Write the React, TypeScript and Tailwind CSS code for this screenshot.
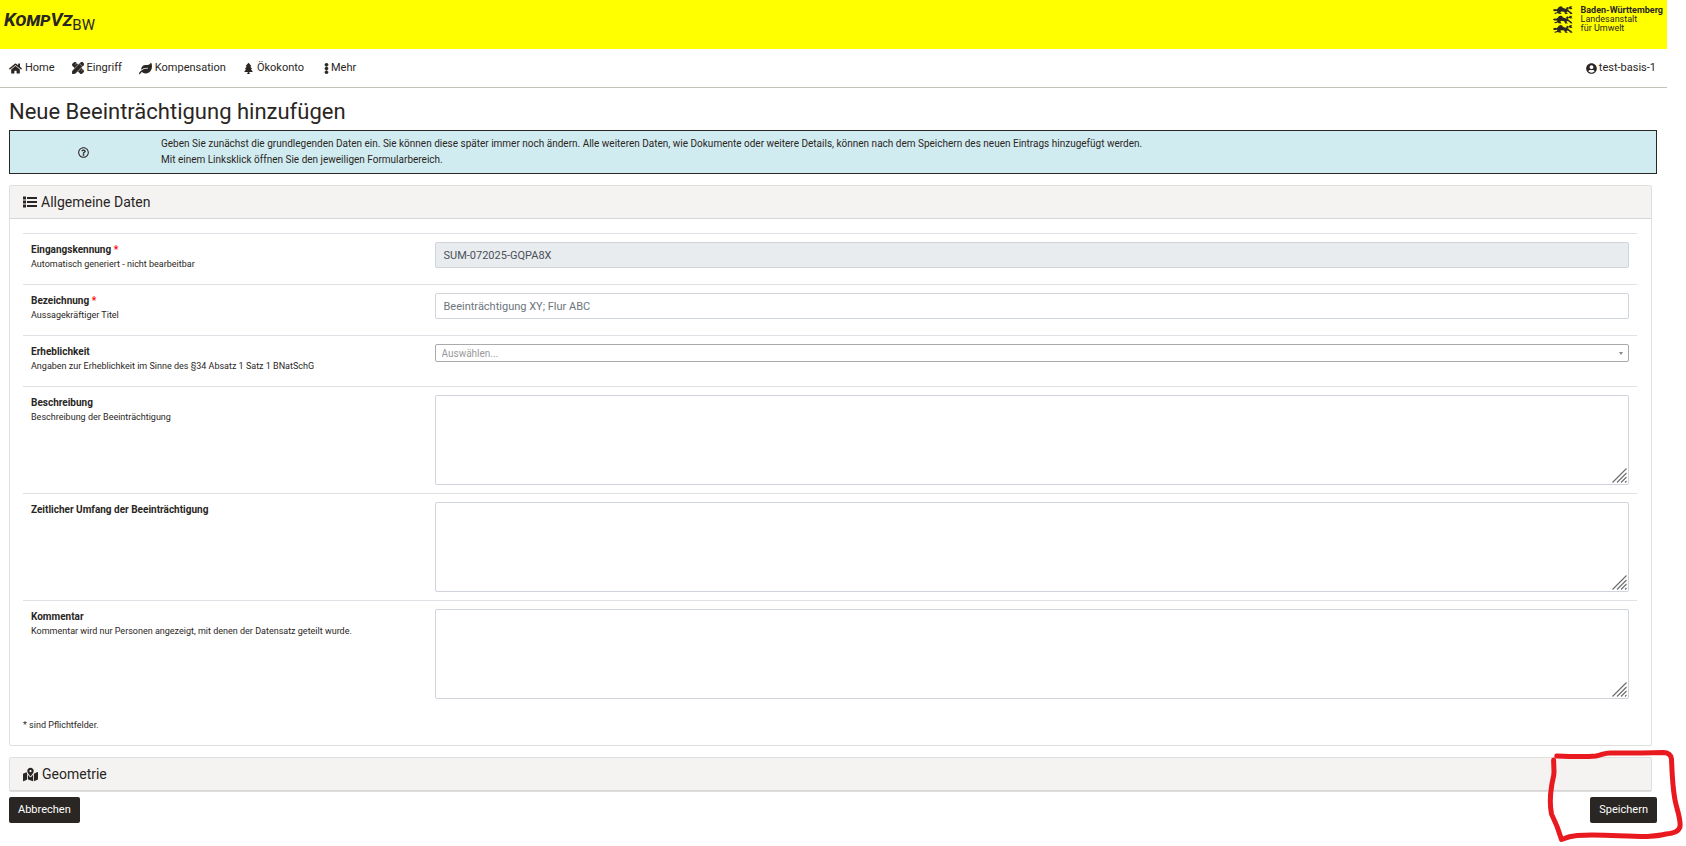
import { useState } from 'react';
import type { ReactNode } from 'react';
import {
  FaEllipsisV,
  FaHome,
  FaLeaf,
  FaMapMarkedAlt,
  FaPencilRuler,
  FaRegQuestionCircle,
  FaTree,
  FaUserCircle,
} from 'react-icons/fa';

const Lion = () => (
  <>
    <path d="M0.2 3.6 L2.2 3 L3.2 3.4 L4.8 2.4 L5.8 0.9 L7.6 0.3 L9.2 0.7 L9.6 1.8 L11.6 2.6 L13.6 3 L15.4 4 L17 5.4 L18.2 6 L19.6 8 L17.4 7.9 L15.8 6.2 L14.2 5.6 L13.4 6.6 L15 8 L12.2 8 L11.2 5.8 L8.8 5.4 L7.2 6 L8.6 8 L5.8 7.8 L4.8 7.1 L2.2 7.9 L1 7.2 L4 6.2 L4.4 5 L1.4 5.2 L0.2 4.6 Z" />
    <path d="M14.6 3.8 L13 2.4 L14 0.9 L15.8 1.6 L17 0.3 L19.4 0.6 L18.2 1.7 L19.6 2.9 L17.4 3.2 L16 2.4 L15 2.6 L15.6 3.8 Z" />
  </>
);

const StateLogo = () => (
  <svg viewBox="0 0 20 28" className="h-7 w-5 fill-[#2a2623]" aria-hidden="true">
    <Lion />
    <g transform="translate(0 9.4)"><Lion /></g>
    <g transform="translate(0 18.8)"><Lion /></g>
  </svg>
);

const ListIcon = () => (
  <svg viewBox="0 0 14 12" className="h-3 w-3.5 fill-current" aria-hidden="true">
    <path d="M0 0.500h3v3H0zM0 4.500h3v3H0zM0 8.500h3v3H0zM4 1h10v2H4zM4 5h10v2H4zM4 9h10v2H4z" />
  </svg>
);

const navItems = [
  { label: 'Home', icon: <FaHome size={13} /> },
  { label: 'Eingriff', icon: <FaPencilRuler size={12} strokeWidth={30} stroke="currentColor" /> },
  { label: 'Kompensation', icon: <FaLeaf size={13} /> },
  { label: 'Ökokonto', icon: <FaTree size={11} /> },
  { label: 'Mehr', icon: <FaEllipsisV size={11} strokeWidth={30} stroke="currentColor" className="-mr-1" /> },
];

interface RowProps {
  id: string
  label: string
  help?: string
  required?: boolean
  children: ReactNode
}

const FormRow = ({ id, label, help, required, children }: RowProps) => (
  <div className="flex min-h-[51px] border-t border-[#dee2e6]">
    <div className="w-1/4 px-2 pt-2">
      <label htmlFor={id} className="block text-[10px] leading-[15px] font-bold">
        {label} {required && <span className="text-[#ff0000]">*</span>}
      </label>
      {help && <p className="text-[9px] leading-[14px]">{help}</p>}
    </div>
    <div className="w-3/4 p-2">{children}</div>
  </div>
);

const inputClass = 'block h-[26px] w-full rounded-xs border border-[#ced4da] px-2 text-[11px] placeholder:text-[#6c757d]';

const GrowArea = ({ id }: { id: string }) => (
  <div className="relative">
    <textarea id={id} className="block h-[90px] w-full resize-none rounded-xs border border-[#ced4da] p-2 text-[11px]" />
    <svg viewBox="0 0 15 15" className="pointer-events-none absolute right-0.5 bottom-0.5 size-[15px] stroke-[#6b6b6b]" aria-hidden="true">
      <path d="M0.5 14.5 L14.5 0.5 M5 14.5 L14.5 5 M9 14.5 L14.5 9 M13 14.5 L14.5 13" fill="none" strokeWidth="1.1" />
    </svg>
  </div>
);

const App = () => {
  const [title, setTitle] = useState('');

  return (
    <div className="pr-[19px] pb-6 font-[Roboto,'Liberation_Sans',sans-serif] text-[#2a2623]">
      <header className="flex h-[49px] items-start justify-between bg-[#ffff00] pr-1 pl-1">
        <a href="#" className="pt-2 text-[19px] leading-6">
          <span className="font-bold italic [font-variant:small-caps]">KompVz</span>
          <sub className="text-[15px]">BW</sub>
        </a>
        <div className="flex gap-2 pt-1.5">
          <StateLogo />
          <p className="text-[9px] leading-[9px]">
            <strong>Baden-Württemberg</strong><br />Landesanstalt<br />für Umwelt
          </p>
        </div>
      </header>

      <nav className="flex h-[39px] items-center justify-between border-b border-[#c4c2b8] px-[9px] text-[11px]">
        <div className="flex gap-[17px]">
          {navItems.map((item) => (
            <a key={item.label} href="#" className="flex items-center gap-[3px]">{item.icon}{item.label}</a>
          ))}
        </div>
        <a href="#" className="flex items-center gap-0.5 pr-0.5"><FaUserCircle size={11} />test-basis-1</a>
      </nav>

      <main className="pr-2.5 pl-[9px]">
        <h1 className="pt-2.5 pb-1 text-[22px] leading-7">Neue Beeinträchtigung hinzufügen</h1>

        <div className="flex h-11 items-center border border-[#2a2623] bg-[#d1ecf1]">
          <div className="flex w-[151px] justify-center pr-1"><FaRegQuestionCircle size={11} /></div>
          <p className="text-[10px] leading-4">
            Geben Sie zunächst die grundlegenden Daten ein. Sie können diese später immer noch ändern. Alle weiteren Daten, wie Dokumente oder weitere Details, können nach dem Speichern des neuen Eintrags hinzugefügt werden.
            <br />
            Mit einem Linksklick öffnen Sie den jeweiligen Formularbereich.
          </p>
        </div>

        <section className="mt-[11px] mr-[5px] rounded-xs border border-[#dfdfdf]">
          <h2 className="flex h-[33px] items-center gap-1 border-b border-[#d6d6d6] bg-[#f4f3f2] px-[13px] text-[14px]">
            <ListIcon />Allgemeine Daten
          </h2>
          <div className="pt-3.5 pr-3.5 pb-3 pl-[13px]">
            <FormRow id="identifier" label="Eingangskennung" help="Automatisch generiert - nicht bearbeitbar" required>
              <input id="identifier" readOnly value="SUM-072025-GQPA8X" className={`${inputClass} bg-[#e9ecef] text-[#495057]`} />
            </FormRow>
            <FormRow id="title" label="Bezeichnung" help="Aussagekräftiger Titel" required>
              <input
                id="title"
                value={title}
                placeholder="Beeinträchtigung XY; Flur ABC"
                className={inputClass}
                onChange={(e) => setTitle(e.target.value)}
              />
            </FormRow>
            <FormRow id="severity" label="Erheblichkeit" help="Angaben zur Erheblichkeit im Sinne des §34 Absatz 1 Satz 1 BNatSchG">
              <div className="relative">
                <select id="severity" className="block h-[18px] w-full appearance-none rounded-xs border border-[#aaaaaa] px-1.5 text-[10px] text-[#999999]">
                  <option>Auswählen...</option>
                </select>
                <svg viewBox="0 0 4 3" className="pointer-events-none absolute top-2 right-1.5 h-[3px] w-1 fill-[#888888]" aria-hidden="true">
                  <path d="M0 0h4L2 3z" />
                </svg>
              </div>
            </FormRow>
            <FormRow id="description" label="Beschreibung" help="Beschreibung der Beeinträchtigung">
              <GrowArea id="description" />
            </FormRow>
            <FormRow id="duration" label="Zeitlicher Umfang der Beeinträchtigung">
              <GrowArea id="duration" />
            </FormRow>
            <FormRow id="comment" label="Kommentar" help="Kommentar wird nur Personen angezeigt, mit denen der Datensatz geteilt wurde.">
              <GrowArea id="comment" />
            </FormRow>
            <p className="pt-2.5 text-[9px] leading-4">* sind Pflichtfelder.</p>
          </div>
        </section>

        <section className="mt-[11px] mr-[5px] rounded-xs border border-[#dfdfdf]">
          <h2 className="flex h-[33px] items-center gap-1 border-b border-[#d6d6d6] bg-[#f4f3f2] px-[13px] text-[14px]">
            <FaMapMarkedAlt size={15} />Geometrie
          </h2>
        </section>

        <div className="relative mt-[5px] flex justify-between">
          <button type="button" className="h-[26px] rounded-xs bg-[#2a2623] px-[9px] text-[11px] text-white">Abbrechen</button>
          <button type="button" className="h-[26px] rounded-xs bg-[#2a2623] px-[9px] text-[11px] text-white">Speichern</button>
          <svg viewBox="0 0 136 96" className="pointer-events-none absolute -top-12 -right-[29px] h-24 w-[136px] overflow-visible" aria-hidden="true">
            <path
              d="M6.7 7 C20 7.500 34 8 46 7 C52 6 54 4 60 4 C78 4 96 4 113 3.500 C119 3.500 121 6 121.500 10 C122 24 122.500 36 124.500 48 C126 59 131 69 130 77.500 C129 83 123 84 116 85 C108 87 102 87 96 87.500 C72 87.500 50 85 27 86.500 C20 87 15 89 11.500 90.500 C9 82 5 72 1.500 65 C0 57 0 47 1.500 38 C2 32 4 28 4 23 L3.600 11"
              fill="none" stroke="#e81a1f" strokeWidth="5" strokeLinecap="round" strokeLinejoin="round"
            />
          </svg>
        </div>
      </main>
    </div>
  );
};

export default App;
